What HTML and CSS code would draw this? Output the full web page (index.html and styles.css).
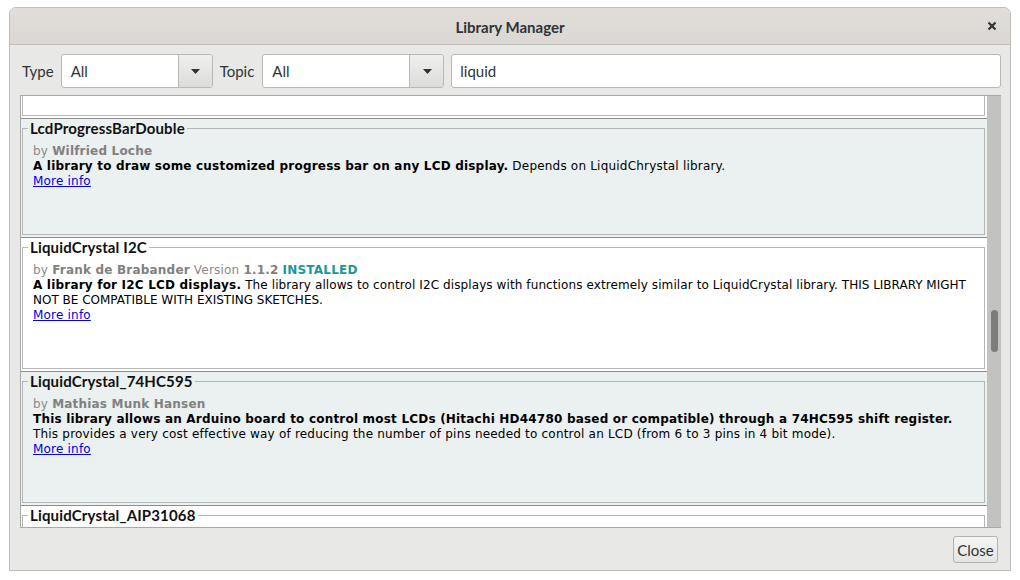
FILE: index.html
```html
<!DOCTYPE html>
<html>
<head>
<meta charset="utf-8">
<title>Library Manager</title>
<link rel="stylesheet" href="styles.css">
</head>
<body>
<div class="window">
  <div class="titlebar">
    <span class="title">Library Manager</span>
    <span class="close-x"><svg width="10" height="10" viewBox="0 0 10 10"><path d="M1.5 1.5 L8.5 8.5 M8.5 1.5 L1.5 8.5" stroke="#2e3436" stroke-width="2.2" fill="none"/></svg></span>
  </div>
  <div class="content">
    <div class="filters">
      <span class="label">Type</span>
      <div class="combo combo-type">
        <span class="combo-value">All</span>
        <span class="combo-btn"><svg width="9" height="5" viewBox="0 0 9 5"><polygon points="0,0 9,0 4.5,5" fill="#2e3436"/></svg></span>
      </div>
      <span class="label">Topic</span>
      <div class="combo combo-topic">
        <span class="combo-value">All</span>
        <span class="combo-btn"><svg width="9" height="5" viewBox="0 0 9 5"><polygon points="0,0 9,0 4.5,5" fill="#2e3436"/></svg></span>
      </div>
      <div class="search">liquid</div>
    </div>
    <div class="list">
      <div class="rows">
        <div class="row row-white row-tail"><div class="tail"></div></div>
        <div class="row row-tint">
          <fieldset class="item">
            <legend>LcdProgressBarDouble</legend>
            <div class="meta">by <b>Wilfried Loche</b></div>
            <div class="desc"><b>A library to draw some customized progress bar on any LCD display.</b> Depends on LiquidChrystal library.</div>
            <a class="more" href="#">More info</a>
          </fieldset>
        </div>
        <div class="row row-white">
          <fieldset class="item">
            <legend>LiquidCrystal I2C</legend>
            <div class="meta">by <b>Frank de Brabander</b> Version <b>1.1.2</b> <b class="installed">INSTALLED</b></div>
            <div class="desc"><b>A library for I2C LCD displays.</b> <span class="tight">The library allows to control I2C displays with functions extremely similar to LiquidCrystal library.</span> <span class="caps">THIS LIBRARY MIGHT</span><br><span class="caps">NOT BE COMPATIBLE WITH EXISTING SKETCHES.</span></div>
            <a class="more" href="#">More info</a>
          </fieldset>
        </div>
        <div class="row row-tint">
          <fieldset class="item">
            <legend>LiquidCrystal_74HC595</legend>
            <div class="meta">by <b>Mathias Munk Hansen</b></div>
            <div class="desc"><b>This library allows an Arduino board to control most LCDs (Hitachi HD44780 based or compatible) through a 74HC595 shift register.</b><br>This provides a very cost effective way of reducing the number of pins needed to control an LCD (from 6 to 3 pins in 4 bit mode).</div>
            <a class="more" href="#">More info</a>
          </fieldset>
        </div>
        <div class="row row-white">
          <fieldset class="item item-partial">
            <legend>LiquidCrystal_AIP31068</legend>
          </fieldset>
        </div>
      </div>
      <div class="scrollbar"><div class="thumb"></div></div>
    </div>
    <div class="footer">
      <button class="btn">Close</button>
    </div>
  </div>
</div>
</body>
</html>
```

FILE: styles.css
```css
html, body {
  margin: 0;
  padding: 0;
  background: #ffffff;
}
body {
  font-family: "DejaVu Sans", sans-serif;
}
.window {
  box-sizing: border-box;
  margin: 7px 0 0 9px;
  width: 1002px;
  height: 564px;
  border: 1px solid #bfbcb8;
  border-radius: 7px 7px 0 0;
  background: #e8e8e7;
  display: flex;
  flex-direction: column;
  overflow: hidden;
}
.titlebar {
  height: 36px;
  flex: none;
  border-bottom: 1px solid #c2beba;
  background: linear-gradient(#e1ddd9, #dbd7d3);
  display: flex;
  align-items: center;
  justify-content: center;
  position: relative;
}
.title {
  font-family: Lato, "DejaVu Sans", sans-serif;
  font-weight: bold;
  font-size: 15px;
  color: #2e3436;
  margin-top: 1px;
}
.close-x {
  position: absolute;
  right: 13px;
  top: 13px;
  width: 10px;
  height: 10px;
  display: block;
}
.close-x svg { display: block; }
.content {
  flex: 1;
  display: flex;
  flex-direction: column;
  padding: 9px 9px 7px 10px;
  min-height: 0;
}
.filters {
  height: 34px;
  display: flex;
  align-items: center;
  flex: none;
  padding-left: 2px;
}
.label {
  font-family: Lato, "DejaVu Sans", sans-serif;
  font-size: 15px;
  color: #2e3436;
  margin-right: 7px;
}
.combo, .search {
  box-sizing: border-box;
  height: 34px;
  background: #ffffff;
  border: 1px solid #b8b8b5;
  border-radius: 3px;
  display: flex;
  align-items: center;
  font-family: Lato, "DejaVu Sans", sans-serif;
  font-size: 15px;
  color: #2e3436;
}
.combo {
  margin-right: 7px;
}
.combo-type { width: 152px; }
.combo-topic { width: 182px; margin-left: 1px; }
.combo-value {
  flex: 1;
  padding-left: 9px;
}
.combo-btn {
  width: 34px;
  height: 32px;
  box-sizing: border-box;
  border-left: 1px solid #b8b8b5;
  border-radius: 0 2px 2px 0;
  background: linear-gradient(#efefee, #dcdcda);
  display: flex;
  align-items: center;
  justify-content: center;
}
.combo-btn svg { display: block; margin-left: 1px; }
.search {
  flex: 1;
  padding-left: 8px;
}
.list {
  margin-top: 7px;
  flex: 1;
  min-height: 0;
  display: flex;
  border: 1px solid #a9a9a9;
  border-right: none;
  background: #ffffff;
}
.rows {
  flex: 1;
  overflow: hidden;
}
.row {
  padding: 1px 2px 2px 1px;
  border-top: 1px solid #8d8d8d;
}
.row-white { background: #ffffff; }
.row-tint { background: #ebf0f0; }
.row-tail {
  border-top: none;
  padding-top: 0;
}
.tail {
  height: 19px;
  border: 1px solid #b6b6b6;
  border-top: none;
}
.item {
  margin: 0;
  border: 1px solid #b6b6b6;
  padding: 7px 10px 45px 10px;
  min-width: 0;
  font-size: 12px;
  line-height: 15px;
  letter-spacing: 0.2px;
  color: #000000;
}
.item-partial {
  height: 60px;
  box-sizing: border-box;
}
.item legend {
  font-family: Lato, "DejaVu Sans", sans-serif;
  font-weight: bold;
  font-size: 15px;
  line-height: 17px;
  letter-spacing: 0.15px;
  color: #111111;
  padding: 0 2px;
  margin-left: -5px;
}
.meta {
  color: #8a8a8a;
}
.meta b { color: #808080; }
.meta b.installed { color: #17999a; }
.desc {
  white-space: nowrap;
}
.desc b { color: #000000; }
.caps { letter-spacing: 0; }
.tight { letter-spacing: 0.1px; }
.more {
  display: inline-block;
  color: #0000ee;
  text-decoration: underline;
}
.scrollbar {
  width: 14px;
  flex: none;
  background: #c2c2c0;
  position: relative;
}
.thumb {
  position: absolute;
  left: 4px;
  top: 214px;
  width: 7px;
  height: 42px;
  border-radius: 4px;
  background: #7d7d7d;
}
.footer {
  flex: none;
  display: flex;
  justify-content: flex-end;
  padding-top: 8px;
  padding-right: 3px;
}
.btn {
  box-sizing: border-box;
  width: 45px;
  height: 27px;
  padding: 0;
  border: 1px solid #b2b2b0;
  border-radius: 3px;
  background: linear-gradient(#f5f5f4, #e4e4e2);
  font-family: Lato, "DejaVu Sans", sans-serif;
  font-size: 15px;
  color: #2e3436;
}
```
